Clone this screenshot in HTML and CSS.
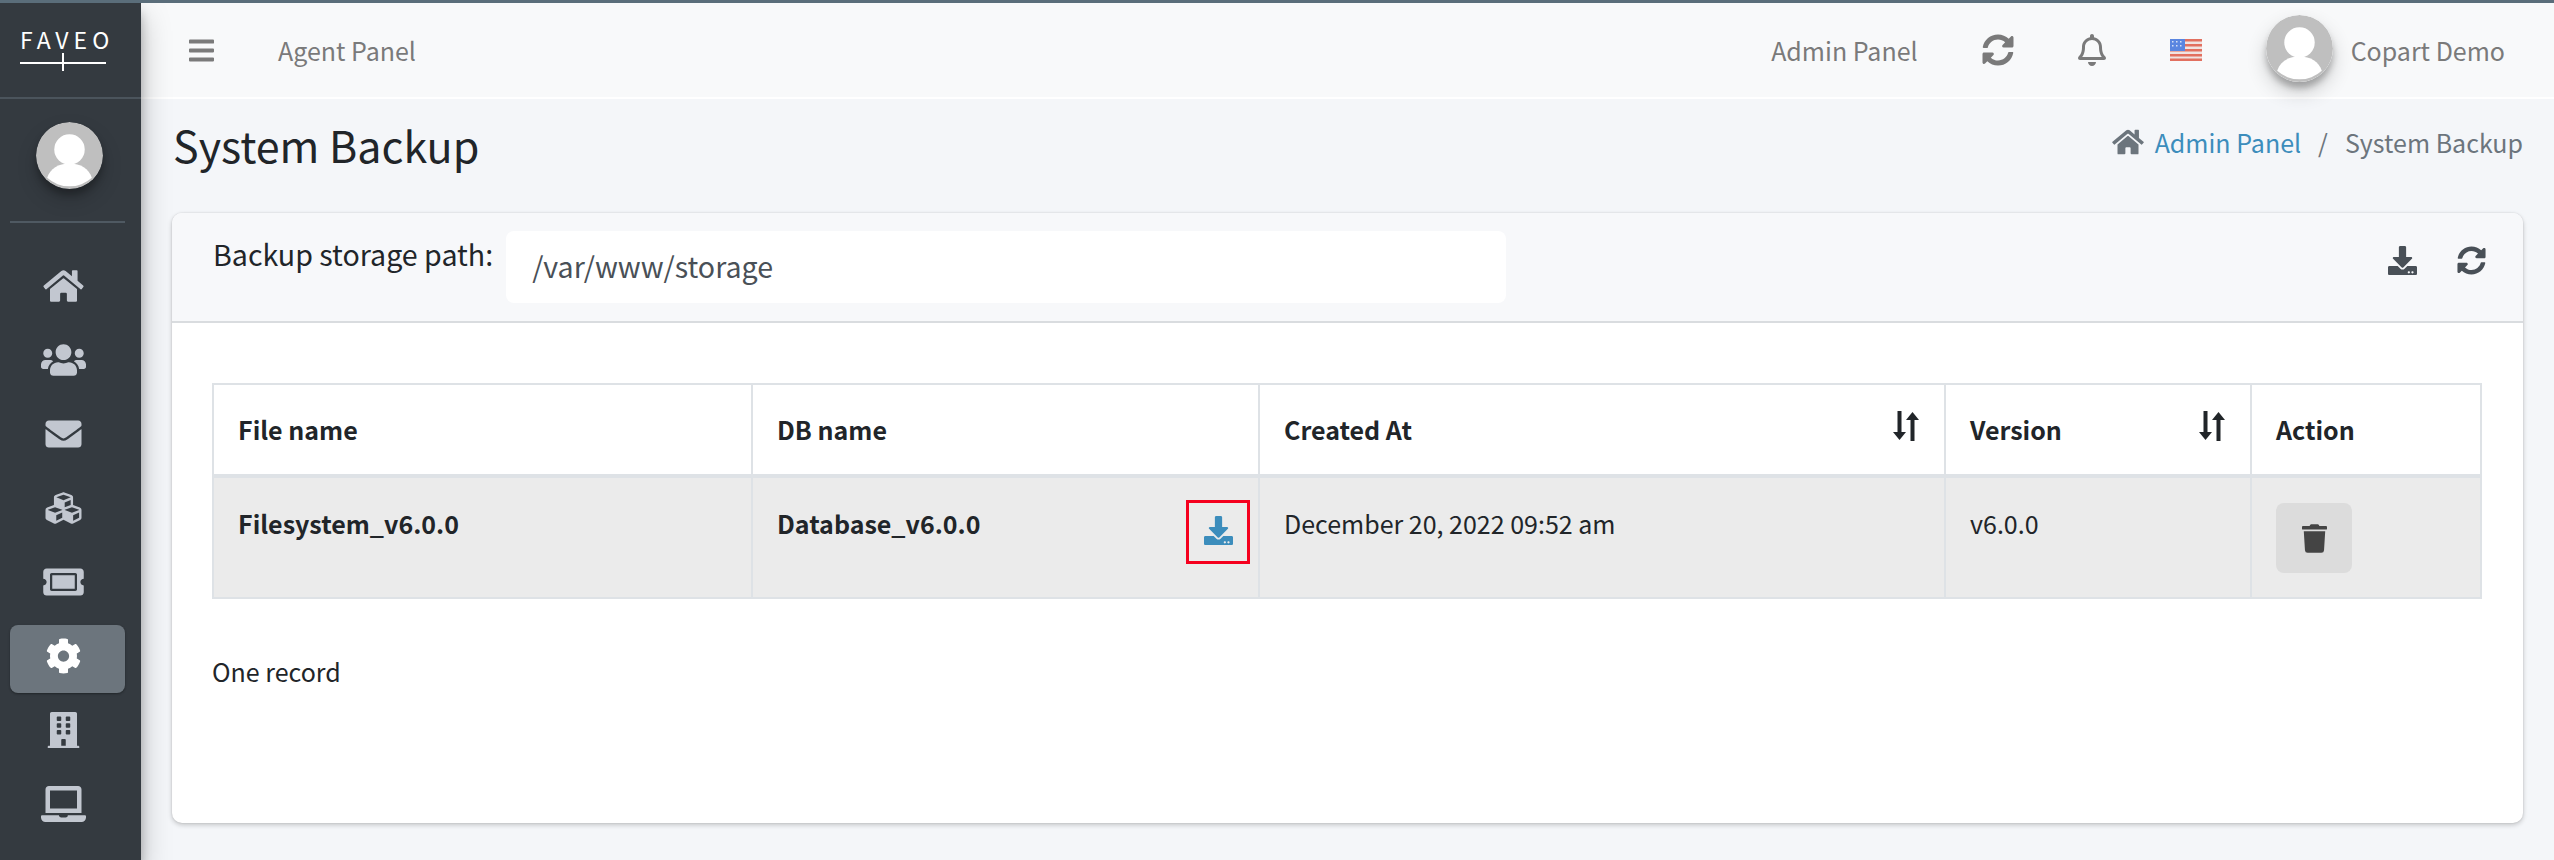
FILE: index.html
```html
<!DOCTYPE html>
<html>

<head>
  <meta charset="utf-8">
  <title>System Backup</title>
  <link rel="stylesheet" href="styles.css">
</head>

<body>
  <svg class="defs" width="0" height="0">
    <symbol id="i-home" viewBox="0 0 576 512"><path d="M280.37 148.26L96 300.11V464a16 16 0 0 0 16 16l112.06-.29a16 16 0 0 0 15.92-16V368a16 16 0 0 1 16-16h64a16 16 0 0 1 16 16v95.64a16 16 0 0 0 16 16.05L464 480a16 16 0 0 0 16-16V300L295.67 148.26a12.19 12.19 0 0 0-15.3 0zM571.6 251.47L488 182.56V44.05a12 12 0 0 0-12-12h-56a12 12 0 0 0-12 12v72.61L318.47 43a48 48 0 0 0-61 0L4.34 251.47a12 12 0 0 0-1.6 16.9l25.5 31A12 12 0 0 0 45.15 301l235.22-193.74a12.19 12.19 0 0 1 15.3 0L530.9 301a12 12 0 0 0 16.9-1.6l25.5-31a12 12 0 0 0-1.7-16.93z"/></symbol>
    <symbol id="i-sync" viewBox="0 0 512 512"><path d="M370.72 133.28C339.458 104.008 298.888 87.962 255.848 88c-77.458.068-144.328 53.178-162.791 126.85-1.344 5.363-6.122 9.15-11.651 9.15H24.103c-7.498 0-13.194-6.807-11.807-14.176C33.933 94.924 134.813 8 256 8c66.448 0 126.791 26.136 171.315 68.685L463.03 40.97C478.149 25.851 504 36.559 504 57.941V192c0 13.255-10.745 24-24 24H345.941c-21.382 0-32.09-25.851-16.971-40.971l41.75-41.749zM32 296h134.059c21.382 0 32.09 25.851 16.971 40.971l-41.75 41.75c31.262 29.273 71.835 45.319 114.876 45.28 77.418-.07 144.315-53.144 162.787-126.849 1.344-5.363 6.122-9.15 11.651-9.15h57.304c7.498 0 13.194 6.807 11.807 14.176C478.067 417.076 377.187 504 256 504c-66.448 0-126.791-26.136-171.315-68.685L48.97 471.03C33.851 486.149 8 475.441 8 454.059V320c0-13.255 10.745-24 24-24z"/></symbol>
    <symbol id="i-download" viewBox="0 0 512 512"><path d="M216 0h80c13.3 0 24 10.7 24 24v168h87.7c17.8 0 26.7 21.5 14.1 34.1L269.7 378.3c-7.5 7.5-19.8 7.5-27.3 0L90.1 226.1c-12.6-12.6-3.7-34.1 14.1-34.1H192V24c0-13.3 10.7-24 24-24zm296 376v112c0 13.3-10.7 24-24 24H24c-13.3 0-24-10.7-24-24V376c0-13.3 10.7-24 24-24h146.7l49 49c20.1 20.1 52.5 20.1 72.6 0l49-49H488c13.3 0 24 10.7 24 24zm-124 88c0-11-9-20-20-20s-20 9-20 20 9 20 20 20 20-9 20-20zm64 0c0-11-9-20-20-20s-20 9-20 20 9 20 20 20 20-9 20-20z"/></symbol>
    <symbol id="i-sort" viewBox="0 0 28 30"><path d="M5.5 0h4v21h4.500L7.500 29 1 21h4.500zM18.500 30h4V9H27l-6.500-8L14 9h4.500z"/></symbol>
    <symbol id="i-avatar" viewBox="0 0 66 66"><circle cx="33" cy="33" r="33" fill="#bfbfbf"/><circle cx="33" cy="27" r="15" fill="#fff"/><path d="M11 55c3-9 11-14 22-14s19 5 22 14a33 33 0 0 1-44 0z" fill="#fff"/></symbol>
  </svg>

  <aside class="sidebar">
    <div class="brand">
      <div class="brand-name">FAVEO</div>
      <div class="brand-line"></div>
    </div>
    <div class="user-panel">
      <svg class="avatar"><use href="#i-avatar"/></svg>
    </div>
    <nav class="nav">
      <a class="nav-item"><svg class="nav-icon" viewBox="0 0 576 512"><use href="#i-home"/></svg></a>
      <a class="nav-item"><svg class="nav-icon" viewBox="0 0 640 512"><path d="M96 224c35.3 0 64-28.7 64-64s-28.7-64-64-64-64 28.7-64 64 28.7 64 64 64zm448 0c35.3 0 64-28.7 64-64s-28.7-64-64-64-64 28.7-64 64 28.7 64 64 64zm32 32h-64c-17.6 0-33.5 7.1-45.1 18.6 40.3 22.1 68.9 62 75.1 109.4h66c17.7 0 32-14.3 32-32v-32c0-35.3-28.7-64-64-64zm-256 0c61.9 0 112-50.1 112-112S381.9 32 320 32 208 82.1 208 144s50.1 112 112 112zm76.8 32h-8.3c-20.8 10-43.9 16-68.5 16s-47.6-6-68.5-16h-8.3C179.6 288 128 339.6 128 403.2V432c0 26.5 21.5 48 48 48h288c26.5 0 48-21.5 48-48v-28.8c0-63.6-51.6-115.2-115.2-115.2zm-223.7-13.4C161.5 263.1 145.6 256 128 256H64c-35.3 0-64 28.7-64 64v32c0 17.7 14.3 32 32 32h65.9c6.3-47.4 34.9-87.3 75.2-109.4z"/></svg></a>
      <a class="nav-item"><svg class="nav-icon" viewBox="0 0 512 512"><path d="M502.3 190.8c3.9-3.1 9.7-.2 9.7 4.7V400c0 26.5-21.5 48-48 48H48c-26.5 0-48-21.5-48-48V195.6c0-5 5.7-7.8 9.7-4.7 22.4 17.4 52.1 39.5 154.1 113.6 21.1 15.4 56.7 47.8 92.2 47.6 35.7.3 72-32.8 92.3-47.6 102-74.1 131.6-96.3 154-113.7zM256 320c23.2.4 56.6-29.2 73.4-41.4 132.7-96.3 142.8-104.7 173.4-128.7 5.8-4.5 9.2-11.5 9.2-18.9v-19c0-26.5-21.5-48-48-48H48C21.5 64 0 85.5 0 112v19c0 7.4 3.4 14.3 9.2 18.9 30.6 23.9 40.7 32.4 173.4 128.7 16.8 12.2 50.2 41.8 73.4 41.4z"/></svg></a>
      <a class="nav-item"><svg class="nav-icon" viewBox="0 0 512 512"><path d="M488.6 250.2L392 214V105.5c0-15-9.3-28.4-23.4-33.7l-100-37.5c-8.1-3.1-17.1-3.1-25.3 0l-100 37.5c-14.1 5.3-23.4 18.7-23.4 33.7V214l-96.6 36.2C9.3 255.5 0 268.9 0 283.9V394c0 13.6 7.7 26.1 19.9 32.2l100 50c10.1 5.1 22.1 5.1 32.2 0l103.9-52 103.9 52c10.1 5.1 22.1 5.1 32.2 0l100-50c12.2-6.1 19.9-18.6 19.9-32.2V283.9c0-15-9.3-28.4-23.4-33.7zM358 214.8l-85 31.9v-68.2l85-37v73.3zM154 104.1l102-38.2 102 38.2v.6l-102 41.4-102-41.4v-.6zm84 291.1l-85 42.5v-79.1l85-38.8v75.4zm0-112l-102 41.4-102-41.4v-.6l102-38.2 102 38.2v.6zm240 112l-85 42.5v-79.1l85-38.8v75.4zm0-112l-102 41.4-102-41.4v-.6l102-38.2 102 38.2v.6z"/></svg></a>
      <a class="nav-item"><svg class="nav-icon" viewBox="0 0 576 512"><path d="M128 160h320v192H128V160zm400 96c0 26.51 21.49 48 48 48v96c0 26.51-21.49 48-48 48H48c-26.51 0-48-21.49-48-48v-96c26.51 0 48-21.49 48-48s-21.49-48-48-48v-96c0-26.51 21.49-48 48-48h480c26.51 0 48 21.49 48 48v96c-26.51 0-48 21.49-48 48zm-48-104c0-13.255-10.745-24-24-24H120c-13.255 0-24 10.745-24 24v208c0 13.255 10.745 24 24 24h336c13.255 0 24-10.745 24-24V152z"/></svg></a>
      <a class="nav-item active"><svg class="nav-icon" viewBox="0 0 512 512"><path d="M487.4 315.7l-42.6-24.6c4.3-23.2 4.3-47 0-70.2l42.6-24.6c4.9-2.8 7.1-8.6 5.5-14-11.1-35.6-30-67.8-54.7-94.6-3.8-4.1-10-5.1-14.8-2.3L380.8 110c-17.9-15.4-38.5-27.3-60.8-35.1V25.8c0-5.6-3.9-10.5-9.4-11.7-36.7-8.2-74.3-7.8-109.2 0-5.5 1.2-9.4 6.1-9.4 11.7V75c-22.2 7.9-42.8 19.8-60.8 35.1L88.7 85.5c-4.9-2.8-11-1.9-14.8 2.3-24.7 26.7-43.6 58.9-54.7 94.6-1.7 5.4.6 11.2 5.5 14L67.3 221c-4.3 23.2-4.3 47 0 70.2l-42.6 24.6c-4.9 2.8-7.1 8.6-5.5 14 11.1 35.6 30 67.8 54.7 94.6 3.8 4.1 10 5.1 14.8 2.3l42.6-24.6c17.9 15.4 38.5 27.3 60.8 35.1v49.2c0 5.6 3.9 10.5 9.4 11.7 36.7 8.2 74.3 7.8 109.2 0 5.5-1.2 9.4-6.1 9.4-11.7v-49.2c22.2-7.9 42.8-19.8 60.8-35.1l42.6 24.6c4.9 2.8 11 1.9 14.8-2.3 24.7-26.7 43.6-58.9 54.7-94.6 1.5-5.5-.7-11.3-5.6-14.1zM256 336c-44.1 0-80-35.9-80-80s35.9-80 80-80 80 35.9 80 80-35.9 80-80 80z"/></svg></a>
      <a class="nav-item"><svg class="nav-icon" viewBox="0 0 448 512"><path d="M436 480h-20V24c0-13.255-10.745-24-24-24H56C42.745 0 32 10.745 32 24v456H12c-6.627 0-12 5.373-12 12v20h448v-20c0-6.627-5.373-12-12-12zM128 76c0-6.627 5.373-12 12-12h40c6.627 0 12 5.373 12 12v40c0 6.627-5.373 12-12 12h-40c-6.627 0-12-5.373-12-12V76zm0 96c0-6.627 5.373-12 12-12h40c6.627 0 12 5.373 12 12v40c0 6.627-5.373 12-12 12h-40c-6.627 0-12-5.373-12-12v-40zm52 148h-40c-6.627 0-12-5.373-12-12v-40c0-6.627 5.373-12 12-12h40c6.627 0 12 5.373 12 12v40c0 6.627-5.373 12-12 12zm76 160h-64v-84c0-6.627 5.373-12 12-12h40c6.627 0 12 5.373 12 12v84zm64-172c0 6.627-5.373 12-12 12h-40c-6.627 0-12-5.373-12-12v-40c0-6.627 5.373-12 12-12h40c6.627 0 12 5.373 12 12v40zm0-96c0 6.627-5.373 12-12 12h-40c-6.627 0-12-5.373-12-12v-40c0-6.627 5.373-12 12-12h40c6.627 0 12 5.373 12 12v40zm0-96c0 6.627-5.373 12-12 12h-40c-6.627 0-12-5.373-12-12V76c0-6.627 5.373-12 12-12h40c6.627 0 12 5.373 12 12v40z"/></svg></a>
      <a class="nav-item"><svg class="nav-icon" viewBox="0 0 640 512"><path d="M624 416H381.54c-.74 19.81-14.71 32-32.74 32H288c-18.69 0-33.02-17.47-32.77-32H16c-8.8 0-16 7.2-16 16v16c0 35.2 28.8 64 64 64h512c35.2 0 64-28.8 64-64v-16c0-8.8-7.2-16-16-16zM576 48c0-26.4-21.6-48-48-48H112C85.6 0 64 21.6 64 48v336h512V48zm-64 272H128V64h384v256z"/></svg></a>
    </nav>
  </aside>

  <div class="main">
    <header class="topbar">
      <svg class="bars" viewBox="0 0 448 512"><path d="M16 132h416c8.837 0 16-7.163 16-16V76c0-8.837-7.163-16-16-16H16C7.163 60 0 67.163 0 76v40c0 8.837 7.163 16 16 16zm0 160h416c8.837 0 16-7.163 16-16v-40c0-8.837-7.163-16-16-16H16c-8.837 0-16 7.163-16 16v40c0 8.837 7.163 16 16 16zm0 160h416c8.837 0 16-7.163 16-16v-40c0-8.837-7.163-16-16-16H16c-8.837 0-16 7.163-16 16v40c0 8.837 7.163 16 16 16z"/></svg>
      <a class="top-link agent-link">Agent Panel</a>
      <div class="top-right">
        <a class="top-link">Admin Panel</a>
        <svg class="top-icon sync-icon"><use href="#i-sync"/></svg>
        <svg class="top-icon bell-icon" viewBox="0 0 448 512"><path d="M439.39 362.29c-19.32-20.76-55.47-51.99-55.47-154.29 0-77.7-54.48-139.9-127.94-155.16V32c0-17.67-14.32-32-31.98-32s-31.98 14.33-31.98 32v20.84C118.56 68.1 64.08 130.3 64.08 208c0 102.3-36.15 133.53-55.47 154.29-6 6.45-8.66 14.16-8.61 21.71.11 16.4 12.98 32 32.1 32h383.8c19.12 0 32-15.6 32.1-32 .05-7.55-2.61-15.27-8.61-21.71zM67.53 368c21.22-27.97 44.42-74.33 44.53-159.42 0-.2-.06-.38-.06-.58 0-61.86 50.14-112 112-112s112 50.14 112 112c0 .2-.06.38-.06.58.11 85.1 23.31 131.46 44.53 159.42H67.53zM224 512c35.32 0 63.97-28.65 63.97-64H160.03c0 35.35 28.65 64 63.97 64z"/></svg>
        <svg class="flag" viewBox="0 0 32 22">
          <rect width="32" height="22" fill="#f0e4e2"/>
          <path d="M0 0h32v2.500H0zM0 5h32v2.500H0zM0 10h32v2.500H0zM0 15h32v2.500H0zM0 19.500h32V22H0z" fill="#e2705f"/>
          <rect width="15" height="12" fill="#5a86e0"/>
          <path d="M2 2h1.500v1.500H2zM6 2h1.500v1.500H6zM10 2h1.500v1.500H10zM2 6h1.500v1.500H2zM6 6h1.500v1.500H6zM10 6h1.500v1.500H10z" fill="#d5e0f5"/>
        </svg>
        <svg class="avatar top-avatar"><use href="#i-avatar"/></svg>
        <a class="top-link user-name">Copart Demo</a>
      </div>
    </header>

    <div class="content">
      <div class="page-head">
        <h1 class="page-title">System Backup</h1>
        <div class="breadcrumb">
          <svg class="crumb-home"><use href="#i-home"/></svg>
          <a class="crumb-link">Admin Panel</a>
          <span class="crumb-sep">/</span>
          <span>System Backup</span>
        </div>
      </div>

      <section class="card">
        <div class="card-header">
          <label class="path-label">Backup storage path:</label>
          <input class="path-input" type="text" value="/var/www/storage">
          <div class="card-tools">
            <svg class="tool-icon"><use href="#i-download"/></svg>
            <svg class="tool-icon"><use href="#i-sync"/></svg>
          </div>
        </div>
        <div class="card-body">
          <table class="backup-table">
            <thead>
              <tr>
                <th class="col-file">File name</th>
                <th class="col-db">DB name</th>
                <th class="col-date">Created At<svg class="sort-icon"><use href="#i-sort"/></svg></th>
                <th class="col-version">Version<svg class="sort-icon"><use href="#i-sort"/></svg></th>
                <th class="col-action">Action</th>
              </tr>
            </thead>
            <tbody>
              <tr>
                <td><b>Filesystem_v6.0.0</b></td>
                <td class="db-cell"><b>Database_v6.0.0</b>
                  <a class="db-download"><svg class="db-icon"><use href="#i-download"/></svg></a>
                </td>
                <td>December 20, 2022 09:52 am</td>
                <td>v6.0.0</td>
                <td class="action-cell">
                  <button class="btn-delete" type="button">
                    <svg class="trash" viewBox="0 0 448 512"><path d="M432 32H312l-9.4-18.7A24 24 0 0 0 281.1 0H166.8a23.72 23.72 0 0 0-21.4 13.3L136 32H16A16 16 0 0 0 0 48v32a16 16 0 0 0 16 16h416a16 16 0 0 0 16-16V48a16 16 0 0 0-16-16zM53.2 467a48 48 0 0 0 47.9 45h245.8a48 48 0 0 0 47.9-45L416 128H32z"/></svg>
                  </button>
                </td>
              </tr>
            </tbody>
          </table>
          <div class="table-info">One record</div>
        </div>
      </section>
    </div>
  </div>
</body>

</html>
```

FILE: styles.css
```css
html,
body {
  height: 100%;
}

body {
  margin: 0;
  display: flex;
  box-sizing: border-box;
  height: 860px;
  overflow: hidden;
  border-top: 3px solid #5a6d7a;
  background-color: #f4f6f9;
  color: #212529;
  font-family: "Noto Sans CJK SC", "Source Sans Pro", Lato, sans-serif;
  font-size: 25px;
  line-height: 38px;
}

.defs {
  position: absolute;
}

/* sidebar */
.sidebar {
  position: relative;
  z-index: 2;
  flex: 0 0 141px;
  background-color: #343a40;
  box-shadow: 0 14px 28px rgba(0, 0, 0, 0.25), 0 10px 10px rgba(0, 0, 0, 0.22);
}

.brand {
  box-sizing: border-box;
  height: 96px;
  padding-top: 24px;
  border-bottom: 2px solid #4b545c;
}

.brand-name {
  padding-left: 20px;
  color: #fff;
  font-size: 23px;
  line-height: 24px;
  letter-spacing: 5px;
}

.brand-line {
  position: relative;
  width: 86px;
  height: 2px;
  margin: 11px 0 0 20px;
  background-color: #fff;
}

.brand-line:after {
  position: absolute;
  top: -9px;
  left: 42px;
  content: '';
  width: 2px;
  height: 18px;
  background-color: #fff;
}

.user-panel {
  height: 124px;
  box-sizing: border-box;
  margin: 0 16px 0 10px;
  padding: 23px 0 0 3px;
  border-bottom: 2px solid #4f5962;
  text-align: center;
}

.avatar {
  display: block;
  width: 67px;
  height: 67px;
  margin: auto;
  border-radius: 50%;
  box-shadow: 0 10px 20px rgba(0, 0, 0, 0.19), 0 6px 6px rgba(0, 0, 0, 0.23);
}

.nav {
  display: flex;
  flex-direction: column;
  gap: 6px;
  margin: 32px 16px 0 10px;
}

.nav-item {
  display: flex;
  justify-content: center;
  align-items: flex-start;
  box-sizing: border-box;
  width: 115px;
  height: 68px;
  padding: 13px 9px 0 0;
  border-radius: 8px;
  fill: #c2c7d0;
}

.nav-item.active {
  background-color: #6c757d;
  box-shadow: 0 1px 3px rgba(0, 0, 0, 0.12), 0 1px 2px rgba(0, 0, 0, 0.24);
  fill: #fff;
}

.nav-icon {
  height: 36px;
  width: 45px;
}

/* top bar */
.main {
  flex: 1;
  min-width: 0;
}

.topbar {
  display: flex;
  align-items: center;
  box-sizing: border-box;
  height: 96px;
  padding: 0 49px 0 48px;
  border-bottom: 2px solid #fff;
  background-color: #f8f9fa;
}

.bars {
  width: 25px;
  height: 29px;
  fill: #7a7a7a;
}

.top-link {
  color: #7a7a7a;
}

.agent-link {
  margin-left: 64px;
}

.top-right {
  display: flex;
  align-items: center;
  margin-left: auto;
}

.top-icon {
  width: 32px;
  height: 32px;
  fill: #7a7a7a;
}

.sync-icon {
  margin-left: 64px;
}

.bell-icon {
  width: 28px;
  margin-left: 64px;
}

.flag {
  width: 32px;
  height: 22px;
  margin-left: 64px;
  filter: blur(0.5px);
}

.top-avatar {
  margin: -3px 0 0 64px;
}

.user-name {
  margin-left: 18px;
}

/* page */
.content {
  padding: 0 31px;
}

.page-head {
  display: flex;
  justify-content: space-between;
  height: 114px;
}

.page-title {
  margin: 16px 0 0 1px;
  color: #212529;
  font-size: 43px;
  font-weight: 400;
  line-height: 58px;
}

.breadcrumb {
  display: flex;
  align-items: center;
  height: 38px;
  margin-top: 24px;
  color: #6c757d;
}

.crumb-home {
  width: 32px;
  height: 28px;
  margin-right: 11px;
  fill: #6c757d;
}

.crumb-link {
  color: #3c8dbc;
}

.crumb-sep {
  margin: 0 17px;
}

.card {
  height: 610px;
  border-radius: 10px;
  background-color: #fff;
  box-shadow: 0 0 2px rgba(0, 0, 0, 0.125), 0 2px 5px rgba(0, 0, 0, 0.2);
}

.card-header {
  display: flex;
  align-items: flex-start;
  box-sizing: border-box;
  height: 110px;
  padding: 18px 37px 0 41px;
  border-bottom: 2px solid #d9dcdf;
  border-radius: 10px 10px 0 0;
  background-color: #f7f8fa;
}

.path-label {
  margin: 4px 13px 0 0;
  color: #212529;
  font-size: 28.6px;
}

.path-input {
  box-sizing: border-box;
  width: 1000px;
  height: 72px;
  padding: 0 26px 4px;
  border: 0;
  border-radius: 8px;
  outline: 0;
  background-color: #fff;
  color: #495057;
  font-family: inherit;
  font-size: 28.6px;
}

.card-tools {
  display: flex;
  gap: 40px;
  margin: 15px 0 0 auto;
}

.tool-icon {
  width: 29px;
  height: 29px;
  fill: #495057;
}

.card-body {
  padding: 60px 41px 0 40px;
}

.backup-table {
  width: 2270px;
  border-collapse: collapse;
  table-layout: fixed;
  border: 2px solid #dee2e6;
}

.backup-table th,
.backup-table td {
  position: relative;
  box-sizing: border-box;
  padding: 0 24px;
  border: 2px solid #dee2e6;
  text-align: left;
  vertical-align: top;
}

.backup-table th {
  height: 92px;
  padding-top: 25px;
  border-bottom-width: 4px;
  font-weight: 700;
}

.backup-table td {
  height: 122px;
  padding-top: 26px;
  background-color: #ebebeb;
}

.col-file {
  width: 539px;
}

.col-db {
  width: 507px;
}

.col-date {
  width: 686px;
}

.col-version {
  width: 306px;
}

.sort-icon {
  position: absolute;
  top: 26px;
  right: 24px;
  width: 28px;
  height: 30px;
  fill: #212529;
}

.db-download {
  position: absolute;
  top: 22px;
  right: 8px;
  display: flex;
  align-items: center;
  justify-content: center;
  box-sizing: border-box;
  width: 64px;
  height: 64px;
  border: 3px solid #f5001e;
}

.db-icon {
  width: 29px;
  height: 29px;
  margin-top: -3px;
  fill: #3c8dbc;
}

.backup-table .action-cell {
  padding-top: 25px;
}

.btn-delete {
  display: flex;
  align-items: center;
  justify-content: center;
  width: 76px;
  height: 70px;
  padding: 0;
  border: 0;
  border-radius: 8px;
  background-color: #dcdcdc;
}

.trash {
  width: 25px;
  height: 29px;
  fill: #444;
}

.table-info {
  margin-top: 53px;
}
```
